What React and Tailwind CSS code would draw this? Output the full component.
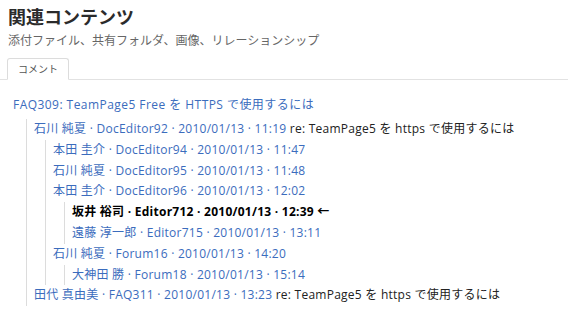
import React from 'react';

const font = { fontFamily: '"Open Sans", "Noto Sans CJK JP", sans-serif' };

const tree = [
  {
    label: '石川 純夏 · DocEditor92 · 2010/01/13 · 11:19',
    re: 're: TeamPage5 を https で使用するには',
    children: [
      { label: '本田 圭介 · DocEditor94 · 2010/01/13 · 11:47' },
      { label: '石川 純夏 · DocEditor95 · 2010/01/13 · 11:48' },
      {
        label: '本田 圭介 · DocEditor96 · 2010/01/13 · 12:02',
        children: [
          { label: '坂井 裕司 · Editor712 · 2010/01/13 · 12:39 ←', current: true },
          { label: '遠藤 淳一郎 · Editor715 · 2010/01/13 · 13:11' },
        ],
      },
      {
        label: '石川 純夏 · Forum16 · 2010/01/13 · 14:20',
        children: [{ label: '大神田 勝 · Forum18 · 2010/01/13 · 15:14' }],
      },
    ],
  },
  {
    label: '田代 真由美 · FAQ311 · 2010/01/13 · 13:23',
    re: 're: TeamPage5 を https で使用するには',
  },
];

function Branch({ items }) {
  return (
    <ul className="ml-[11px] border-l border-[#dcdcdc] pl-[7px]">
      {items.map((item, i) => (
        <li key={i}>
          <div className="leading-[20.8px] whitespace-nowrap">
            {item.current ? (
              <span className="font-bold text-black">{item.label}</span>
            ) : (
              <a className="text-[#3b6cbd]">{item.label}</a>
            )}
            {item.re && <span className="text-[#222]"> {item.re}</span>}
          </div>
          {item.children && <Branch items={item.children} />}
        </li>
      ))}
    </ul>
  );
}

export default function App() {
  return (
    <div className="w-[568px] h-[322px] bg-white overflow-hidden text-[12px]" style={font}>
      <div className="px-[8px] pt-[5px]">
        <h1 className="text-[18px] font-bold text-[#2b2b2b] leading-[24px]">関連コンテンツ</h1>
        <p className="text-[#666] leading-[18px] mt-[3px]">添付ファイル、共有フォルダ、画像、リレーションシップ</p>
      </div>

      {/* Tabs */}
      <div className="mt-[8px] flex border-b border-[#e2e2e2] pl-[7px]">
        <div className="-mb-px border border-b-white border-[#dcdcdc] rounded-t-[3px] bg-white px-[10px] h-[22px] flex items-center text-[10px] text-[#555]">
          コメント
        </div>
      </div>

      <div className="pl-[13px] pt-[15px] tracking-[0.25px]">
        <a className="text-[#3b6cbd] leading-[20px] block tracking-[0.45px]">FAQ309: TeamPage5 Free を HTTPS で使用するには</a>
        <div className="mt-[4px] ml-[2px]">
          <Branch items={tree} />
        </div>
      </div>
    </div>
  );
}
